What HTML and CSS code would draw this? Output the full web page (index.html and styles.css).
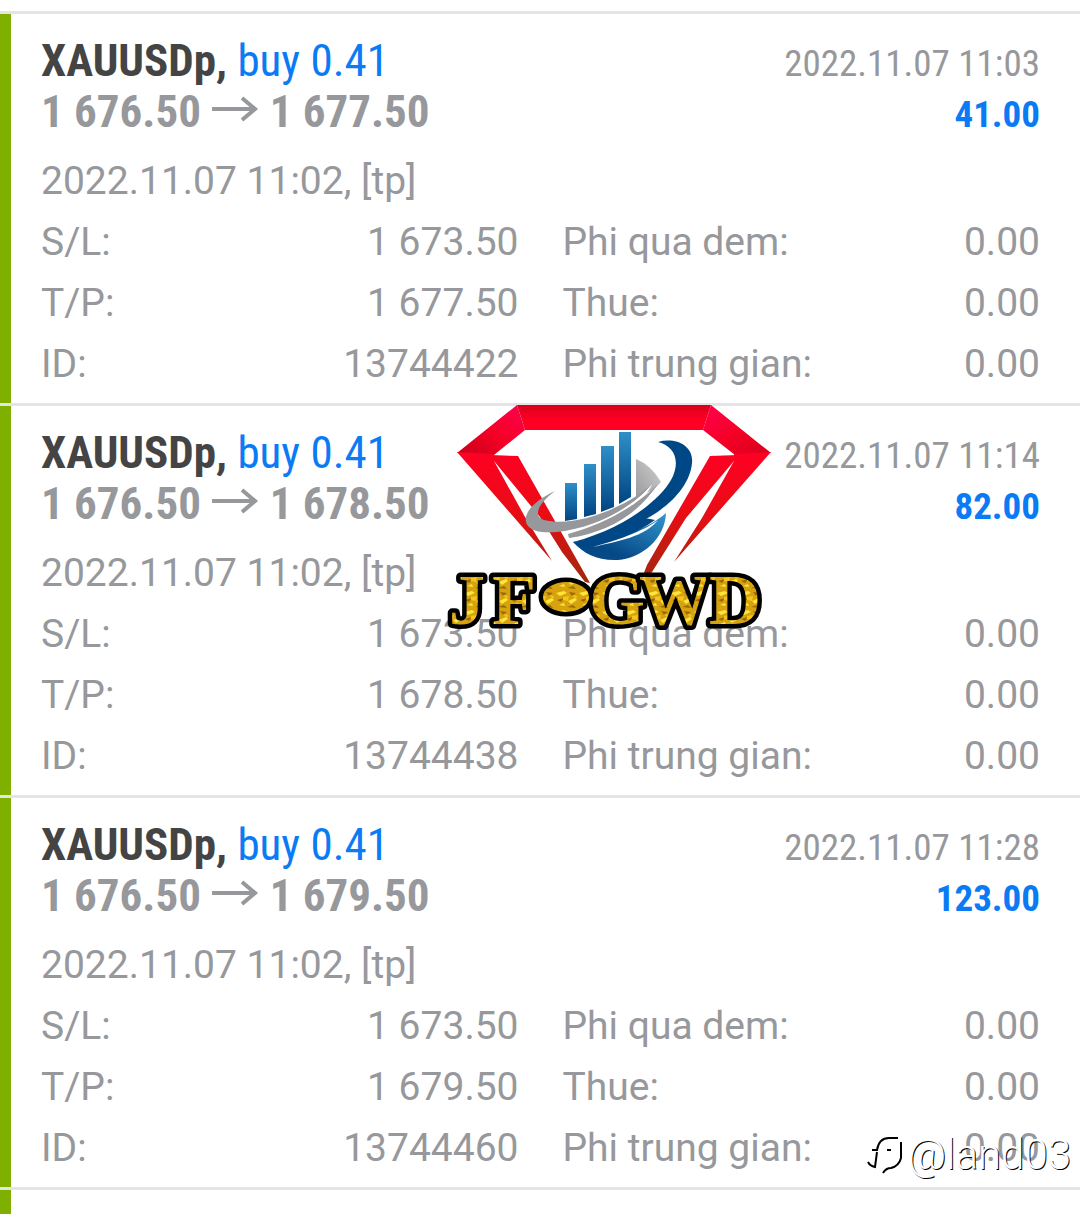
FILE: index.html
```html
<!DOCTYPE html>
<html lang="vi">
<head>
<meta charset="utf-8">
<meta name="viewport" content="width=device-width, initial-scale=1">
<title>XAUUSDp</title>
<link rel="stylesheet" href="styles.css">
</head>
<body>
<main class="history">
  <article class="deal">
    <header class="deal-head">
      <h2 class="symbol">XAUUSDp, <span class="side">buy 0.41</span></h2>
      <time class="closed">2022.11.07 11:03</time>
      <p class="prices">1 676.50 <svg class="arrow" viewBox="0 0 48 28" aria-hidden="true"><path d="M1 14H45M31 3L44 14L31 25"/></svg> 1 677.50</p>
      <p class="profit">41.00</p>
    </header>
    <p class="opened">2022.11.07 11:02, [tp]</p>
    <dl class="details">
      <div class="row"><dt>S/L:</dt><dd>1 673.50</dd></div>
      <div class="row"><dt>Phi qua dem:</dt><dd>0.00</dd></div>
      <div class="row"><dt>T/P:</dt><dd>1 677.50</dd></div>
      <div class="row"><dt>Thue:</dt><dd>0.00</dd></div>
      <div class="row"><dt>ID:</dt><dd>13744422</dd></div>
      <div class="row"><dt>Phi trung gian:</dt><dd>0.00</dd></div>
    </dl>
  </article>

  <article class="deal">
    <header class="deal-head">
      <h2 class="symbol">XAUUSDp, <span class="side">buy 0.41</span></h2>
      <time class="closed">2022.11.07 11:14</time>
      <p class="prices">1 676.50 <svg class="arrow" viewBox="0 0 48 28" aria-hidden="true"><path d="M1 14H45M31 3L44 14L31 25"/></svg> 1 678.50</p>
      <p class="profit">82.00</p>
    </header>
    <p class="opened">2022.11.07 11:02, [tp]</p>
    <dl class="details">
      <div class="row"><dt>S/L:</dt><dd>1 673.50</dd></div>
      <div class="row"><dt>Phi qua dem:</dt><dd>0.00</dd></div>
      <div class="row"><dt>T/P:</dt><dd>1 678.50</dd></div>
      <div class="row"><dt>Thue:</dt><dd>0.00</dd></div>
      <div class="row"><dt>ID:</dt><dd>13744438</dd></div>
      <div class="row"><dt>Phi trung gian:</dt><dd>0.00</dd></div>
    </dl>
    <svg class="logo" viewBox="0 0 340 240" role="img" aria-label="JF GWD">
      <defs>
        <linearGradient id="band" x1="0" y1="0" x2="0" y2="1"><stop offset="0" stop-color="#d9001c"/><stop offset=".6" stop-color="#ff0024"/></linearGradient>
        <linearGradient id="wingL" x1="0" y1="1" x2="1" y2="0"><stop offset="0" stop-color="#c80018"/><stop offset=".5" stop-color="#f60026"/><stop offset="1" stop-color="#ff0050"/></linearGradient>
        <linearGradient id="wingR" x1="1" y1="1" x2="0" y2="0"><stop offset="0" stop-color="#d8001c"/><stop offset=".5" stop-color="#f60026"/><stop offset="1" stop-color="#ff0050"/></linearGradient>
        <linearGradient id="leg" gradientUnits="userSpaceOnUse" x1="0" y1="52" x2="0" y2="185"><stop offset="0" stop-color="#ff0024"/><stop offset=".45" stop-color="#ea0c14"/><stop offset="1" stop-color="#9c2a0c"/></linearGradient>
        <linearGradient id="bar" x1="0" y1="0" x2="0" y2="1"><stop offset="0" stop-color="#2f8fc8"/><stop offset="1" stop-color="#004582"/></linearGradient>
        <linearGradient id="bowl" x1="0" y1="1" x2="1" y2="0"><stop offset=".3" stop-color="#064987"/><stop offset="1" stop-color="#3196ce"/></linearGradient>
        <linearGradient id="sail" x1="0" y1="1" x2="1" y2="0"><stop offset="0" stop-color="#9b9b9e"/><stop offset="1" stop-color="#d0d0d0"/></linearGradient>
        <pattern id="gold" width="23" height="19" patternUnits="userSpaceOnUse">
          <path fill="#d6a30f" d="M0 0h23v19H0z"/>
          <path fill="#ffe43a" d="M1 3l8-2 3 2-7 3zM13 11l7-3 2 2-6 4zM4 15l5-2 1 3z"/>
          <path fill="#9a680a" d="M14 2l7 1-4 3zM2 10l7-2-3 4zM12 17l6-2 3 3z"/>
          <path fill="#f5c51a" d="M8 7l6-1-1 5-5-1zM17 5l5 1-1 3z"/>
        </pattern>
      </defs>
      <path fill="url(#band)" d="M77 5H271L263 30H85z"/>
      <path fill="url(#wingL)" d="M77 5L85 30L54 55L17 53z"/>
      <path fill="url(#wingR)" d="M271 5L331 53L295 55L263 30z"/>
      <g fill="url(#leg)">
        <path d="M17 52L54 54V61L85 117L112 161z"/>
        <path d="M50 55L78 56L150 183L145 182L122 152L100 117L54 61z"/>
        <path d="M331 52L294 54V61L262 118L234 162z"/>
        <path d="M298 55L270 56L207 165L200 183L212 172L246 118L294 61z"/>
      </g>
      <g fill="url(#bar)">
        <path d="M125 83H137V119L125 121z"/>
        <path d="M144 64H156V114L144 117z"/>
        <path d="M161 46H174V107L161 112z"/>
        <path d="M179 32H191V97L179 104z"/>
      </g>
      <path fill="url(#sail)" d="M196 59Q211 65 221 82Q212 93 196 97z"/>
      <path fill="#97989c" d="M115 91C99 103 92 116 104 120C132 127 172 112 198 95L212 84C184 120 126 135 102 132C78 129 79 108 115 91z"/>
      <path fill="#fff" d="M127 133C165 122 195 105 212 84C208 100 165 127 127 137z"/>
      <path fill="#97989c" d="M128 134C164 124 195 107 218 84C197 116 165 133 129 138z"/>
      <path fill="#004785" d="M218 42C236 37 254 46 252 63C250 88 224 112 197 123C178 133 157 140 133 142C183 129 219 101 231 80C241 62 235 46 218 42z"/>
      <path fill="url(#bowl)" d="M133 142C164 144 205 132 226 113C225 139 202 158 178 160C158 161 144 154 133 142z"/>
      <path fill="#004785" d="M133 142C160 138 185 130 205 118L215 120C195 135 170 143 145 149z"/>
      <path fill="#fff" d="M153 147C174 141 203 132 218 120C205 137 178 141 153 147z"/>
      <g class="lettering">
        <text x="9 52" y="224">JF</text>
        <text x="149" y="224">G</text>
        <text x="199" y="224">W</text>
        <text x="269" y="224">D</text>
        <ellipse cx="126" cy="197" rx="23" ry="15"/>
      </g>
    </svg>
  </article>

  <article class="deal">
    <header class="deal-head">
      <h2 class="symbol">XAUUSDp, <span class="side">buy 0.41</span></h2>
      <time class="closed">2022.11.07 11:28</time>
      <p class="prices">1 676.50 <svg class="arrow" viewBox="0 0 48 28" aria-hidden="true"><path d="M1 14H45M31 3L44 14L31 25"/></svg> 1 679.50</p>
      <p class="profit">123.00</p>
    </header>
    <p class="opened">2022.11.07 11:02, [tp]</p>
    <dl class="details">
      <div class="row"><dt>S/L:</dt><dd>1 673.50</dd></div>
      <div class="row"><dt>Phi qua dem:</dt><dd>0.00</dd></div>
      <div class="row"><dt>T/P:</dt><dd>1 679.50</dd></div>
      <div class="row"><dt>Thue:</dt><dd>0.00</dd></div>
      <div class="row"><dt>ID:</dt><dd>13744460</dd></div>
      <div class="row"><dt>Phi trung gian:</dt><dd>0.00</dd></div>
    </dl>
    <p class="credit">
      <svg class="credit-mark" viewBox="0 0 38 40" aria-hidden="true">
        <path fill="#fff" d="M1 27Q8 30 9 18L5 15L11 11Q14 2 24 2L35 6V24Q32 32 25 33L17 38Z"/>
        <path class="ink" d="M6 15H11Q13 3 23 3H32M21 15H25M11 17L9 32Q4 31 2 27M35 7V23Q33 31 25 33Q20 33 17 38"/>
      </svg>
      <span>@land03</span>
    </p>
  </article>
  <div class="deal-next"></div>
</main>
</body>
</html>
```
FILE: styles.css
```css
* {
  box-sizing: border-box;
}

body,
h2,
p,
dl,
dd {
  margin: 0;
}

body {
  background: #fff;
  color: #97989c;
  font-family: Roboto, "Noto Sans", sans-serif;
  font-size: 39px;
}

.history {
  display: flex;
  flex-direction: column;
  min-height: 100vh;
  padding-top: 11px;
}

.deal,
.deal-next {
  position: relative;
  border-top: 3px solid #e4e4e4;
  background: linear-gradient(#7fb000, #7fb000) left / 11px 100% no-repeat;
}

.deal {
  padding: 21px 40px 8px 41px;
}

.deal-next {
  flex: 1;
}

.deal-head {
  display: grid;
  grid-template-columns: 1fr auto;
  align-items: baseline;
  margin-bottom: 14px;
  font-family: "Roboto Condensed", "Liberation Sans Narrow", Roboto, sans-serif;
}

.symbol,
.prices {
  font-size: 45px;
  font-weight: 700;
  line-height: 51px;
}

.symbol {
  color: #444;
}

.side {
  color: #0a7bf5;
  font-weight: 400;
}

.closed,
.profit {
  font-size: 37px;
  line-height: 40px;
  text-align: right;
}

.profit {
  color: #0a7bf5;
  font-weight: 700;
}

.arrow {
  width: 48px;
  height: 28px;
  vertical-align: 4px;
  fill: none;
  stroke: #97989c;
  stroke-width: 4;
}

.opened,
.row {
  line-height: 61px;
}

.details {
  display: grid;
  grid-template-columns: 1fr 1fr;
  column-gap: 44px;
}

.row {
  display: flex;
  justify-content: space-between;
}

.logo {
  position: absolute;
  top: -6px;
  left: 440px;
  width: 340px;
  height: 240px;
  overflow: visible;
}

.lettering {
  fill: url(#gold);
  stroke: #000;
  stroke-width: 9px;
  stroke-linejoin: round;
  paint-order: stroke;
  font-family: "Liberation Serif", serif;
  font-size: 72px;
  font-weight: 700;
}

.credit {
  position: absolute;
  right: 9px;
  bottom: 8px;
  display: flex;
  align-items: center;
  gap: 4px;
  color: #fff;
  font-size: 42px;
  font-weight: 300;
  line-height: 48px;
  text-shadow: 1px 1px 0 #000;
}

.credit-mark {
  width: 38px;
  height: 40px;
}

.ink {
  fill: none;
  stroke: #000;
  stroke-width: 2;
}
```
